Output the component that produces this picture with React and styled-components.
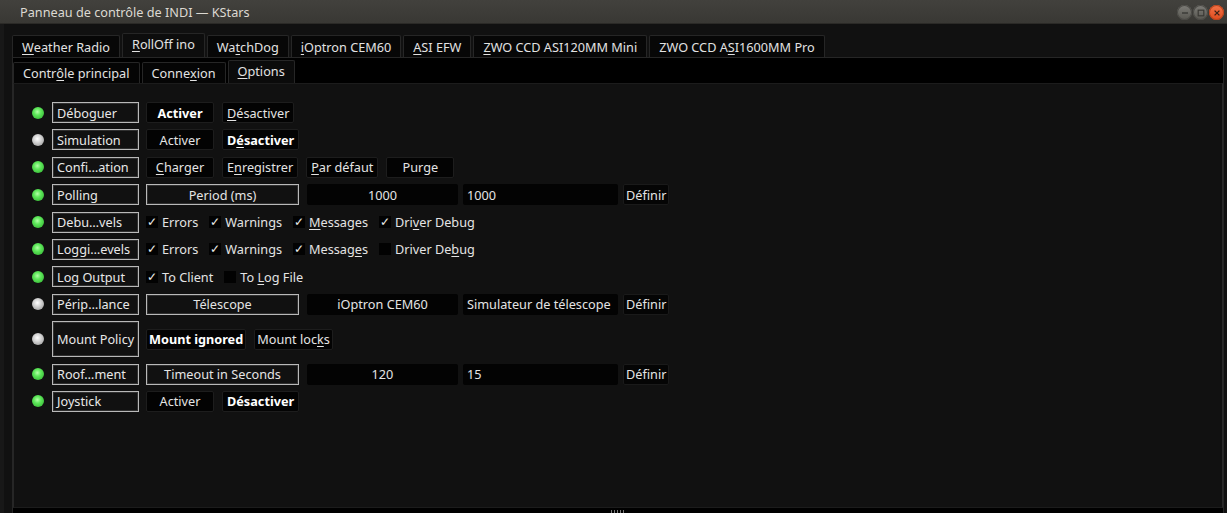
import React from 'react';
import styled, { createGlobalStyle, css } from 'styled-components';

const deviceTabs = [
  { t: 'Weather Radio', u: 0 },
  { t: 'RollOff ino', u: 0, active: true },
  { t: 'WatchDog', u: 2 },
  { t: 'iOptron CEM60', u: 0 },
  { t: 'ASI EFW', u: 0 },
  { t: 'ZWO CCD ASI120MM Mini', u: 0 },
  { t: 'ZWO CCD ASI1600MM Pro', u: 9 },
];

const subTabs = [
  { t: 'Contrôle principal', u: 5 },
  { t: 'Connexion', u: 5 },
  { t: 'Options', u: 0, active: true },
];

const rows = [
  { led: 'on', label: 'Déboguer', kind: 'buttons', items: [{ t: 'Activer', bold: true }, { t: 'Désactiver', u: 0 }] },
  { led: 'off', label: 'Simulation', kind: 'buttons', items: [{ t: 'Activer' }, { t: 'Désactiver', bold: true, u: 1 }] },
  {
    led: 'on',
    label: 'Confi…ation',
    kind: 'buttons',
    items: [{ t: 'Charger', u: 0 }, { t: 'Enregistrer', u: 1 }, { t: 'Par défaut', u: 0 }, { t: 'Purge' }],
  },
  { led: 'on', label: 'Polling', kind: 'value', name: 'Period (ms)', value: '1000', input: '1000' },
  {
    led: 'on',
    label: 'Debu…vels',
    kind: 'checks',
    items: [
      { t: 'Errors', on: true },
      { t: 'Warnings', on: true },
      { t: 'Messages', on: true, u: 0 },
      { t: 'Driver Debug', on: true, u: 3 },
    ],
  },
  {
    led: 'on',
    label: 'Loggi…evels',
    kind: 'checks',
    items: [
      { t: 'Errors', on: true },
      { t: 'Warnings', on: true },
      { t: 'Messages', on: true, u: 6 },
      { t: 'Driver Debug', u: 9 },
    ],
  },
  {
    led: 'on',
    label: 'Log Output',
    kind: 'checks',
    items: [{ t: 'To Client', on: true }, { t: 'To Log File', u: 3 }],
  },
  {
    led: 'off',
    label: 'Périp…lance',
    kind: 'value',
    name: 'Télescope',
    value: 'iOptron CEM60',
    input: 'Simulateur de télescope',
  },
  {
    led: 'off',
    label: 'Mount Policy',
    tall: true,
    kind: 'buttons',
    items: [
      { t: 'Mount ignored', bold: true, fit: true },
      { t: 'Mount locks', u: 9, fit: true },
    ],
  },
  { led: 'on', label: 'Roof…ment', kind: 'value', name: 'Timeout in Seconds', value: '120', input: '15' },
  { led: 'on', label: 'Joystick', kind: 'buttons', items: [{ t: 'Activer' }, { t: 'Désactiver', bold: true }] },
];

// text with a keyboard accelerator underlined
const Mnemonic = ({ text, u }) => {
  if (u === undefined) return text;
  return (
    <>
      {text.slice(0, u)}
      <U>{text[u]}</U>
      {text.slice(u + 1)}
    </>
  );
};

const WindowButton = ({ close, children }) => <RoundBtn $close={close}>{children}</RoundBtn>;

const App = () => {
  return (
    <Window>
      <GlobalStyle />
      <TitleBar>
        <Title>Panneau de contrôle de INDI — KStars</Title>
        <Controls>
          <WindowButton>
            <svg width="14" height="14" viewBox="0 0 14 14">
              <rect x="4" y="6.3" width="6" height="1.4" fill="#3a3935" />
            </svg>
          </WindowButton>
          <WindowButton>
            <svg width="14" height="14" viewBox="0 0 14 14">
              <rect x="4.2" y="4.2" width="5.6" height="5.6" fill="none" stroke="#3a3935" strokeWidth="1.2" />
            </svg>
          </WindowButton>
          <WindowButton close>
            <svg width="14" height="14" viewBox="0 0 14 14">
              <path d="M4.6 4.6 L9.4 9.4 M9.4 4.6 L4.6 9.4" stroke="#3b2319" strokeWidth="1.3" />
            </svg>
          </WindowButton>
        </Controls>
      </TitleBar>

      <Main>
        <TabBar>
          {deviceTabs.map((tab) => (
            <Tab key={tab.t} $active={tab.active}>
              <Mnemonic text={tab.t} u={tab.u} />
            </Tab>
          ))}
        </TabBar>

        <DevicePanel>
          <SubTabBar>
            {subTabs.map((tab) => (
              <SubTab key={tab.t} $active={tab.active}>
                <Mnemonic text={tab.t} u={tab.u} />
              </SubTab>
            ))}
          </SubTabBar>

          <OptionsPanel>
            {rows.map((row) => (
              <Row key={row.label}>
                <Led $on={row.led === 'on'} />
                <Label $tall={row.tall}>{row.label}</Label>
                <Controls2>
                  {row.kind === 'buttons' &&
                    row.items.map((b) => (
                      <Button key={b.t} $bold={b.bold} $fit={b.fit}>
                        <Mnemonic text={b.t} u={b.u} />
                      </Button>
                    ))}

                  {row.kind === 'checks' && (
                    <Checks>
                      {row.items.map((c) => (
                        <CheckItem key={c.t}>
                          <Box>{c.on ? '✓' : ''}</Box>
                          <span>
                            <Mnemonic text={c.t} u={c.u} />
                          </span>
                        </CheckItem>
                      ))}
                    </Checks>
                  )}

                  {row.kind === 'value' && (
                    <>
                      <NameBox>{row.name}</NameBox>
                      <Field $center>{row.value}</Field>
                      <Field $input>{row.input}</Field>
                      <SetButton>Définir</SetButton>
                    </>
                  )}
                </Controls2>
              </Row>
            ))}
          </OptionsPanel>

          <Footer>
            <Grip />
          </Footer>
        </DevicePanel>
      </Main>
    </Window>
  );
};

export default App;

const GlobalStyle = createGlobalStyle`
  html, body {
    margin: 0;
    padding: 0;
    background: #111111;
  }
  * {
    box-sizing: border-box;
  }
`;

const Window = styled.div`
  width: 1227px;
  height: 513px;
  display: flex;
  flex-direction: column;
  font-family: 'Noto Sans', 'Open Sans', sans-serif;
  font-size: 12.7px;
  color: #e4e4e4;
  overflow: hidden;
`;

const TitleBar = styled.div`
  height: 24px;
  flex: none;
  display: flex;
  align-items: center;
  justify-content: space-between;
  padding: 0 3px 0 20px;
  background: linear-gradient(#42413d, #393834);
  border-bottom: 1px solid #2b2a27;
`;

const Title = styled.div`
  color: #dcd9d2;
  font-size: 12.7px;
`;

const Controls = styled.div`
  display: flex;
  gap: 1px;
  margin-top: 2px;
`;

const RoundBtn = styled.div`
  width: 15px;
  height: 15px;
  border-radius: 50%;
  display: flex;
  align-items: center;
  justify-content: center;
  background: ${({ $close }) =>
    $close ? 'linear-gradient(#f47449, #dd4b1d)' : 'linear-gradient(#7e7d78, #56554f)'};
  box-shadow: inset 0 0 0 1px ${({ $close }) => ($close ? '#b9431c' : '#4a4945')};
`;

const Main = styled.div`
  flex: 1;
  display: flex;
  flex-direction: column;
  padding: 9px 3px 0 8px;
  background: #111111;
  border-left: 4px solid #181818;
`;

const TabBar = styled.div`
  display: flex;
  align-items: flex-end;
  gap: 2px;
  height: 24px;
  flex: none;
`;

const tabBase = css`
  display: flex;
  align-items: center;
  padding: 0 9px;
  background: #070707;
  border: 1px solid #262626;
  border-bottom: none;
  border-radius: 2px 2px 0 0;
  white-space: nowrap;
  color: #e2e2e2;
`;

const Tab = styled.div`
  ${tabBase};
  height: ${({ $active }) => ($active ? '24px' : '22px')};
  padding-bottom: ${({ $active }) => ($active ? '3px' : '0')};
  background: ${({ $active }) => ($active ? '#0d0d0d' : '#070707')};
`;

const DevicePanel = styled.div`
  flex: 1;
  display: flex;
  flex-direction: column;
  background: #000000;
  border: 1px solid #262626;
  border-bottom: none;
`;

const SubTabBar = styled.div`
  display: flex;
  align-items: flex-end;
  gap: 2px;
  height: 25px;
  flex: none;
`;

const SubTab = styled.div`
  ${tabBase};
  height: ${({ $active }) => ($active ? '23px' : '21px')};
  padding-bottom: ${({ $active }) => ($active ? '2px' : '0')};
  background: ${({ $active }) => ($active ? '#0b0b0b' : '#050505')};
`;

const OptionsPanel = styled.div`
  flex: 1;
  display: flex;
  flex-direction: column;
  gap: 6.4px;
  padding: 18px 0 0 18px;
  background: #111111;
  border-top: 1px solid #1c1c1c;
  border-left: 1px solid #262626;
  border-right: 1px solid #2a2a2a;
  border-bottom: 1px solid #1c1c1c;
`;

const Row = styled.div`
  display: flex;
  align-items: center;
  min-height: 21px;
`;

const Led = styled.div`
  width: 12px;
  height: 12px;
  border-radius: 50%;
  flex: none;
  background: ${({ $on }) =>
    $on
      ? 'radial-gradient(circle at 45% 40%, #b4ffa8 0%, #5ee85a 35%, #2aa82a 100%)'
      : 'radial-gradient(circle at 45% 40%, #ffffff 0%, #d2d2d2 40%, #8c8c8c 100%)'};
  margin-right: 8px;
`;

const Label = styled.div`
  width: 87px;
  height: ${({ $tall }) => ($tall ? '36px' : '21px')};
  flex: none;
  display: flex;
  align-items: center;
  padding: 0 4px;
  border: 1px solid #b9b9b9;
  box-shadow: inset 0 0 0 1px #303030;
  white-space: nowrap;
  overflow: hidden;
  color: #e8e8e8;
  margin-right: 7px;
`;

const Controls2 = styled.div`
  display: flex;
  align-items: center;
  gap: 8px;
`;

const Button = styled.div`
  height: 21px;
  min-width: ${({ $fit }) => ($fit ? '0' : '68px')};
  padding: 0 ${({ $fit }) => ($fit ? '2px' : '4px')};
  display: flex;
  align-items: center;
  justify-content: center;
  background: #030303;
  border: 1px solid #1d1d1d;
  border-radius: 2px;
  font-weight: ${({ $bold }) => ($bold ? 700 : 400)};
  color: ${({ $bold }) => ($bold ? '#ffffff' : '#e4e4e4')};
  white-space: nowrap;
`;

const Checks = styled.div`
  display: flex;
  align-items: center;
  gap: 11px;
  height: 21px;
`;

const CheckItem = styled.div`
  display: flex;
  align-items: center;
  gap: 4px;
  white-space: nowrap;
`;

const Box = styled.div`
  width: 12px;
  height: 12px;
  background: #020202;
  display: flex;
  align-items: center;
  justify-content: center;
  font-size: 12px;
  color: #e8e8e8;
  line-height: 1;
`;

const NameBox = styled.div`
  width: 153px;
  height: 21px;
  display: flex;
  align-items: center;
  justify-content: center;
  border: 1px solid #b9b9b9;
  box-shadow: inset 0 0 0 1px #303030;
  white-space: nowrap;
`;

const Field = styled.div`
  width: ${({ $input }) => ($input ? '155px' : '151px')};
  height: 21px;
  display: flex;
  align-items: center;
  justify-content: ${({ $center }) => ($center ? 'center' : 'flex-start')};
  padding: 0 4px;
  background: #030303;
  border-radius: 2px;
  margin-left: ${({ $input }) => ($input ? '-3px' : '0')};
  white-space: nowrap;
`;

const SetButton = styled.div`
  height: 21px;
  padding: 0 2px;
  display: flex;
  align-items: center;
  background: #050505;
  border: 1px solid #1a1a1a;
  border-radius: 2px;
  margin-left: -3px;
`;

const Footer = styled.div`
  height: 5px;
  flex: none;
  display: flex;
  justify-content: center;
  background: #000000;
`;

const Grip = styled.div`
  width: 14px;
  height: 3px;
  margin-top: 2px;
  background: repeating-linear-gradient(90deg, #777 0 1px, transparent 1px 3px);
`;

const U = styled.span`
  text-decoration: underline;
  text-underline-offset: 2px;
`;
